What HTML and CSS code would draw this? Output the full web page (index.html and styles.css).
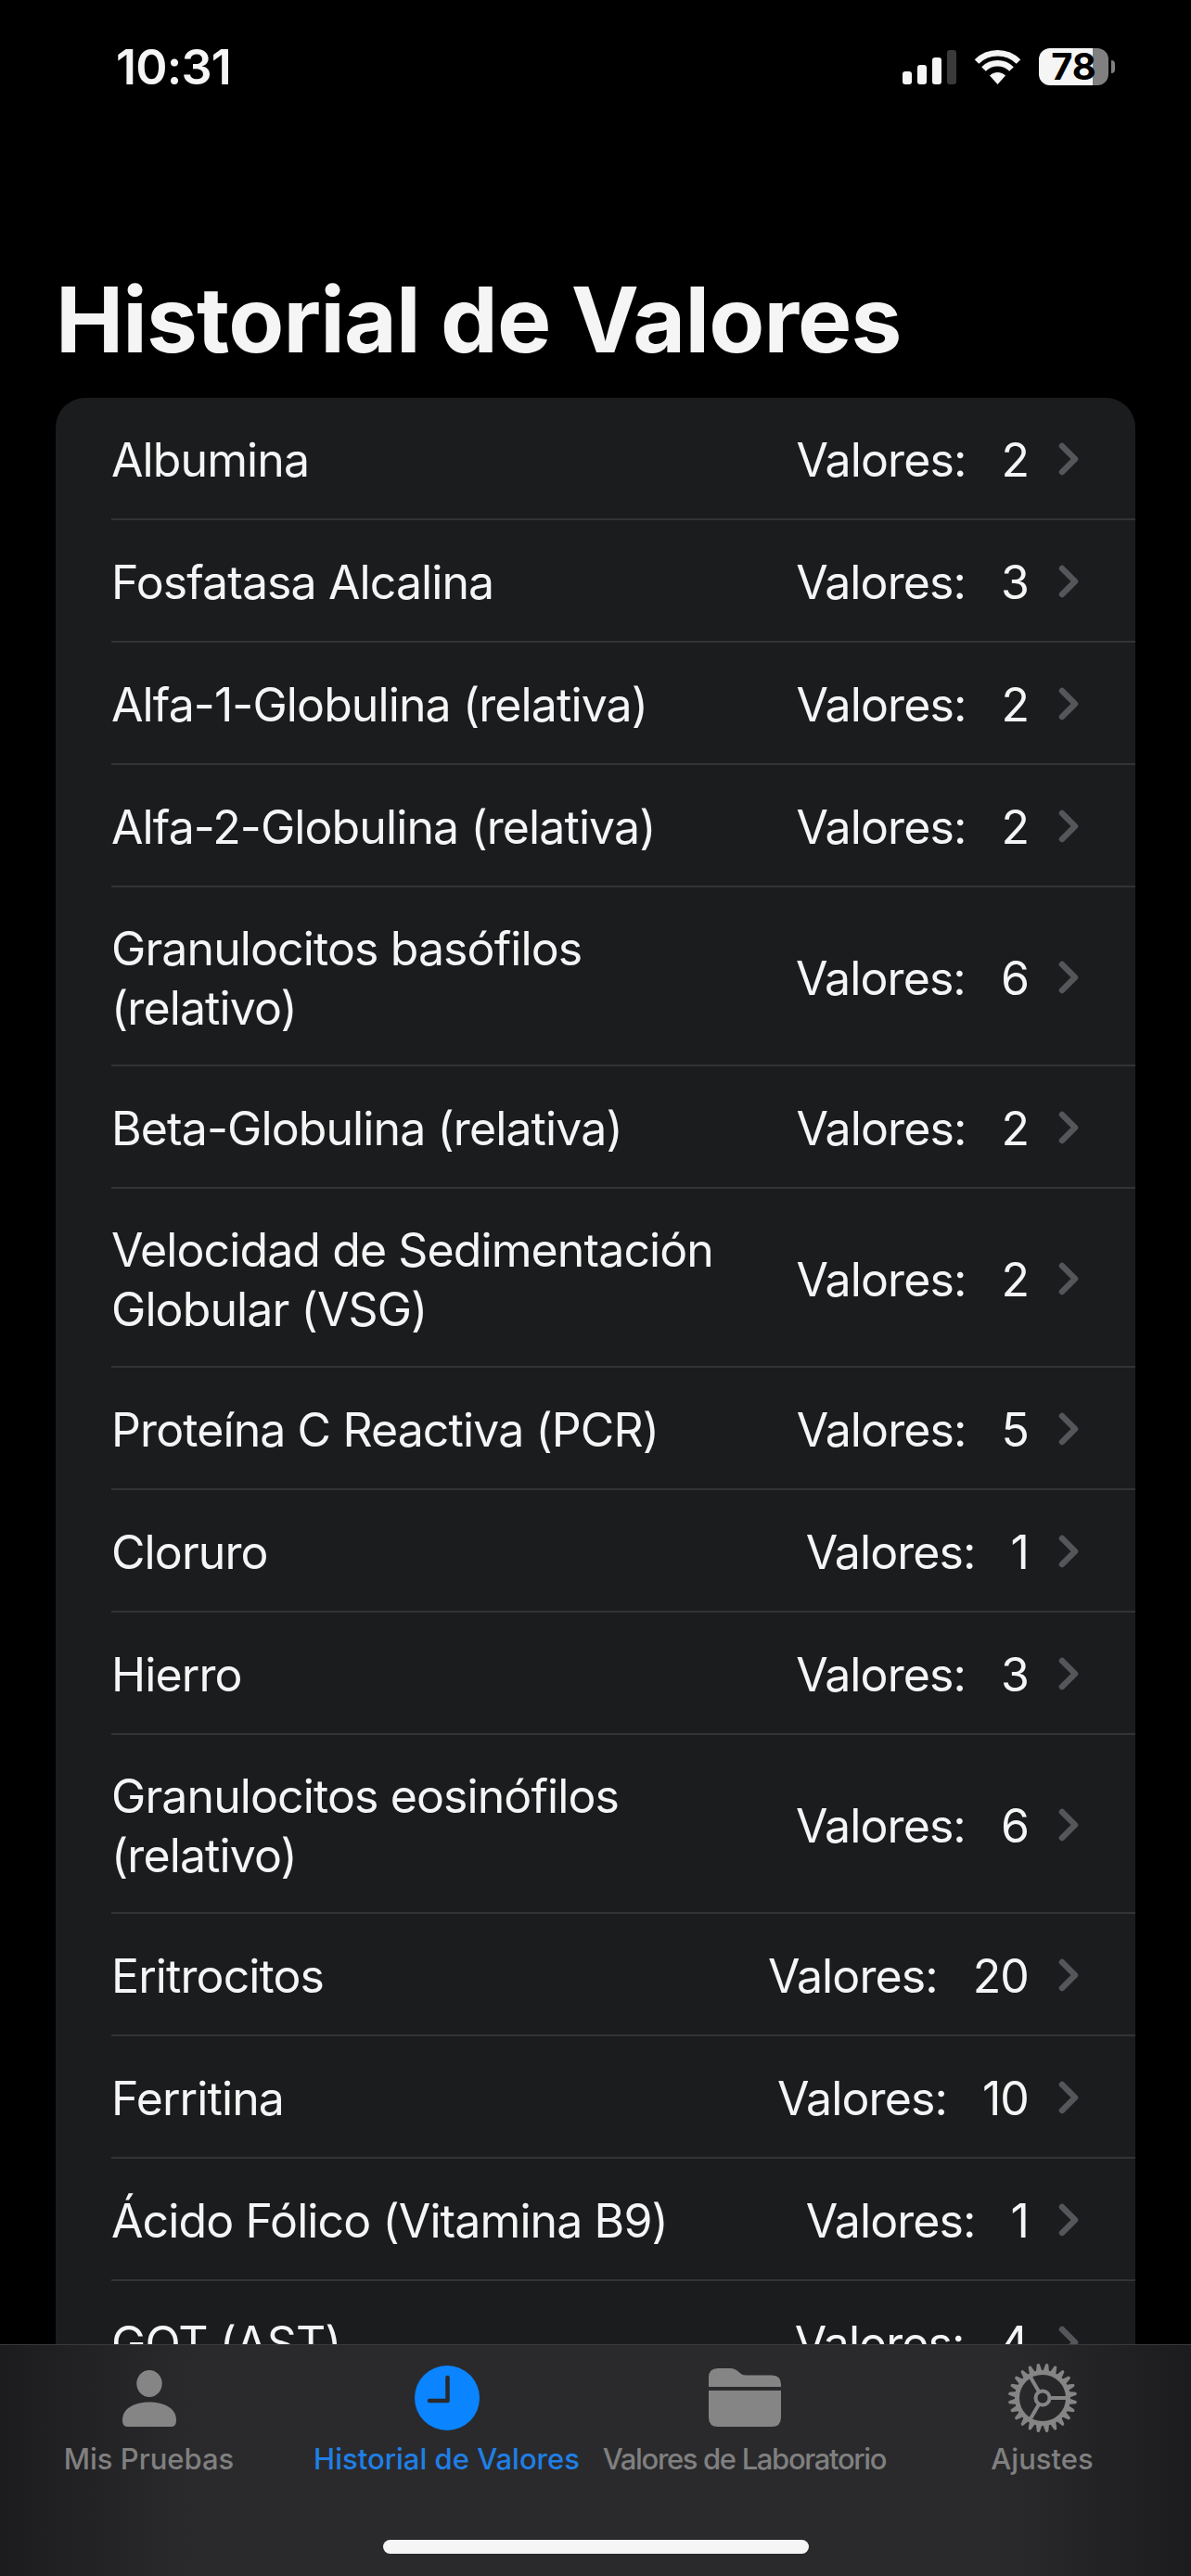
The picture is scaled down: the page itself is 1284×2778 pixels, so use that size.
FILE: index.html
```html
<!DOCTYPE html>
<html lang="es">
<head>
    <meta charset="UTF-8">
    <title>Historial de Valores</title>
    <link rel="stylesheet" href="styles.css">
</head>
<body>
    <div class="screen">
        <div class="status-bar">
            <span class="time">10:31</span>
            <div class="status-icons">
                <div class="signal">
                    <i class="bar bar-1"></i>
                    <i class="bar bar-2"></i>
                    <i class="bar bar-3"></i>
                    <i class="bar bar-4"></i>
                </div>
                <svg class="wifi" width="51" height="37" viewBox="0 0 51 37">
                    <path d="M25.5 37 17 27.5a12 12 0 0 1 17 0z" fill="#f5f5f5"/>
                    <path d="M10.5 20.5a21 21 0 0 1 30 0" fill="none" stroke="#f5f5f5" stroke-width="6.5"/>
                    <path d="M3 12.5a32 32 0 0 1 45 0" fill="none" stroke="#f5f5f5" stroke-width="6.5"/>
                </svg>
                <div class="battery">78</div>
            </div>
        </div>

        <h1 class="title">Historial de Valores</h1>

        <div class="list">
            <div class="row"><span class="name">Albumina</span><span class="label">Valores:</span><span class="count">2</span><svg class="chevron" width="22" height="36" viewBox="0 0 22 36"><path d="M4 4l14 14L4 32"/></svg></div>
            <div class="row"><span class="name">Fosfatasa Alcalina</span><span class="label">Valores:</span><span class="count">3</span><svg class="chevron" width="22" height="36" viewBox="0 0 22 36"><path d="M4 4l14 14L4 32"/></svg></div>
            <div class="row"><span class="name">Alfa-1-Globulina (relativa)</span><span class="label">Valores:</span><span class="count">2</span><svg class="chevron" width="22" height="36" viewBox="0 0 22 36"><path d="M4 4l14 14L4 32"/></svg></div>
            <div class="row"><span class="name">Alfa-2-Globulina (relativa)</span><span class="label">Valores:</span><span class="count">2</span><svg class="chevron" width="22" height="36" viewBox="0 0 22 36"><path d="M4 4l14 14L4 32"/></svg></div>
            <div class="row"><span class="name">Granulocitos basófilos (relativo)</span><span class="label">Valores:</span><span class="count">6</span><svg class="chevron" width="22" height="36" viewBox="0 0 22 36"><path d="M4 4l14 14L4 32"/></svg></div>
            <div class="row"><span class="name">Beta-Globulina (relativa)</span><span class="label">Valores:</span><span class="count">2</span><svg class="chevron" width="22" height="36" viewBox="0 0 22 36"><path d="M4 4l14 14L4 32"/></svg></div>
            <div class="row"><span class="name">Velocidad de Sedimentación Globular (VSG)</span><span class="label">Valores:</span><span class="count">2</span><svg class="chevron" width="22" height="36" viewBox="0 0 22 36"><path d="M4 4l14 14L4 32"/></svg></div>
            <div class="row"><span class="name">Proteína C Reactiva (PCR)</span><span class="label">Valores:</span><span class="count">5</span><svg class="chevron" width="22" height="36" viewBox="0 0 22 36"><path d="M4 4l14 14L4 32"/></svg></div>
            <div class="row"><span class="name">Cloruro</span><span class="label">Valores:</span><span class="count">1</span><svg class="chevron" width="22" height="36" viewBox="0 0 22 36"><path d="M4 4l14 14L4 32"/></svg></div>
            <div class="row"><span class="name">Hierro</span><span class="label">Valores:</span><span class="count">3</span><svg class="chevron" width="22" height="36" viewBox="0 0 22 36"><path d="M4 4l14 14L4 32"/></svg></div>
            <div class="row"><span class="name">Granulocitos eosinófilos (relativo)</span><span class="label">Valores:</span><span class="count">6</span><svg class="chevron" width="22" height="36" viewBox="0 0 22 36"><path d="M4 4l14 14L4 32"/></svg></div>
            <div class="row"><span class="name">Eritrocitos</span><span class="label">Valores:</span><span class="count">20</span><svg class="chevron" width="22" height="36" viewBox="0 0 22 36"><path d="M4 4l14 14L4 32"/></svg></div>
            <div class="row"><span class="name">Ferritina</span><span class="label">Valores:</span><span class="count">10</span><svg class="chevron" width="22" height="36" viewBox="0 0 22 36"><path d="M4 4l14 14L4 32"/></svg></div>
            <div class="row"><span class="name">Ácido Fólico (Vitamina B9)</span><span class="label">Valores:</span><span class="count">1</span><svg class="chevron" width="22" height="36" viewBox="0 0 22 36"><path d="M4 4l14 14L4 32"/></svg></div>
            <div class="row"><span class="name">GOT (AST)</span><span class="label">Valores:</span><span class="count">4</span><svg class="chevron" width="22" height="36" viewBox="0 0 22 36"><path d="M4 4l14 14L4 32"/></svg></div>
        </div>

        <div class="tab-bar">
            <div class="tabs">
                <div class="tab">
                    <svg width="76" height="76" viewBox="0 0 76 76">
                        <ellipse cx="38" cy="22.5" rx="13.7" ry="14.5" fill="#858585"/>
                        <path d="M9 62c0-13 13-19.500 29-19.500S67 49 67 62q0 7-5 7H14q-5 0-5-7z" fill="#858585"/>
                    </svg>
                    <span class="tab-label">Mis Pruebas</span>
                </div>
                <div class="tab active">
                    <svg width="76" height="76" viewBox="0 0 76 76">
                        <circle cx="38" cy="38" r="35" fill="#0a84ff"/>
                        <path d="M38.500 16v25H19" fill="none" stroke="#2a2a2c" stroke-width="4.500" stroke-linecap="round" stroke-linejoin="round"/>
                    </svg>
                    <span class="tab-label">Historial de Valores</span>
                </div>
                <div class="tab">
                    <svg width="78" height="76" viewBox="0 0 78 76">
                        <path d="M0 26V16q0-10 10-10h13q6 0 10 4.500 3 3 7 3h28q10 0 10 10v2.500z" fill="#858585"/>
                        <path d="M0 30h78v29q0 10-10 10H10Q0 69 0 59z" fill="#858585"/>
                    </svg>
                    <span class="tab-label tight">Valores de Laboratorio</span>
                </div>
                <div class="tab">
                    <svg width="76" height="76" viewBox="0 0 76 76">
                        <defs>
                            <path id="tooth" d="M34.500 10l2-8.500q1.500-1.500 3 0l2 8.500z" transform="rotate(7.500 38 38)"/>
                            <g id="teeth">
                                <use href="#tooth"/>
                                <use href="#tooth" transform="rotate(15 38 38)"/>
                                <use href="#tooth" transform="rotate(30 38 38)"/>
                                <use href="#tooth" transform="rotate(45 38 38)"/>
                                <use href="#tooth" transform="rotate(60 38 38)"/>
                                <use href="#tooth" transform="rotate(75 38 38)"/>
                            </g>
                        </defs>
                        <g fill="#858585">
                            <use href="#teeth"/>
                            <use href="#teeth" transform="rotate(90 38 38)"/>
                            <use href="#teeth" transform="rotate(180 38 38)"/>
                            <use href="#teeth" transform="rotate(270 38 38)"/>
                        </g>
                        <g fill="none" stroke="#858585">
                            <circle cx="38" cy="38" r="27.500" stroke-width="5"/>
                            <circle cx="38" cy="38" r="7.500" stroke-width="4"/>
                            <path d="M45.500 38H65M34.200 31.500 24.500 14.700M34.200 44.500 24.500 61.300" stroke-width="4"/>
                        </g>
                    </svg>
                    <span class="tab-label">Ajustes</span>
                </div>
            </div>
            <div class="home-indicator"></div>
        </div>
    </div>
</body>
</html>
```

FILE: styles.css
```css
* {
    box-sizing: border-box;
}

body {
    margin: 0;
    background-color: #000;
    font-family: Inter, "Noto Sans", sans-serif;
    color: #f5f5f5;
}

.screen {
    position: relative;
    width: 1284px;
    height: 2778px;
    overflow: hidden;
    background-color: #000;
}

/* status bar */
.status-bar {
    display: flex;
    justify-content: space-between;
    align-items: center;
    height: 144px;
    padding: 0 89px 0 125px;
}

.time {
    font-size: 52px;
    font-weight: 600;
    letter-spacing: -0.8px;
}

.status-icons {
    display: flex;
    align-items: center;
    gap: 19px;
}

.signal {
    display: flex;
    align-items: flex-end;
    gap: 6px;
    height: 37px;
}

.bar {
    width: 10px;
    border-radius: 3px;
    background-color: #f5f5f5;
}

.bar-1 { height: 14px; }
.bar-2 { height: 21px; }
.bar-3 { height: 29px; }
.bar-4 { height: 37px; background-color: #3a3a3a; }

.battery {
    position: relative;
    width: 75px;
    height: 40px;
    border-radius: 12px;
    background: linear-gradient(90deg, #f5f5f5 78%, #808080 78%);
    color: #000;
    font-size: 40px;
    font-weight: 700;
    line-height: 40px;
    text-align: center;
}

.battery::after {
    content: "";
    position: absolute;
    right: -7px;
    top: 13px;
    width: 4px;
    height: 14px;
    border-radius: 0 4px 4px 0;
    background-color: #808080;
}

/* header */
.title {
    margin: 141px 0 24px 60px;
    font-size: 98px;
    font-weight: 700;
    line-height: 120px;
    letter-spacing: -0.85px;
}

/* list */
.list {
    width: 1164px;
    margin-left: 60px;
    padding-left: 60px;
    border-radius: 32px;
    background-color: #1b1c1e;
    font-size: 50px;
    line-height: 64px;
    letter-spacing: -0.9px;
}

.row {
    display: flex;
    align-items: center;
    min-height: 132px;
    padding: 31.5px 61px 31.5px 0;
    border-bottom: 2px solid #333336;
}

/* text sits a little under the middle of the row */
.name,
.label,
.count {
    margin-top: 2px;
    margin-bottom: -2px;
}

.name {
    flex: 1;
    padding-right: 70px;
}

.label {
    margin-right: 38px;
}

.chevron {
    margin-top: 2px;
    margin-left: 32px;
    fill: none;
    stroke: #55555a;
    stroke-width: 6.5;
    stroke-linecap: round;
    stroke-linejoin: round;
}

/* tab bar */
.tab-bar {
    position: absolute;
    left: 0;
    right: 0;
    bottom: 0;
    height: 250px;
    padding-top: 19px;
    border-top: 1px solid #3a3a3c;
    background: linear-gradient(90deg, #1c1c1e 0, #2a2a2c 16%, #2a2a2c 84%, #1c1c1e 100%);
}

.tabs {
    display: grid;
    grid-template-columns: repeat(4, minmax(0, 1fr));
}

.tab {
    display: flex;
    flex-direction: column;
    align-items: center;
    gap: 10px;
    color: #808080;
}

.tab.active {
    color: #1f7fe6;
}

.tab-label {
    font-size: 31px;
    font-weight: 500;
    line-height: 36px;
    white-space: nowrap;
}

.tab-label.tight {
    letter-spacing: -1.35px;
}

.home-indicator {
    width: 459px;
    height: 15px;
    margin: 69px auto 0;
    border-radius: 8px;
    background-color: #f5f5f5;
}
```
